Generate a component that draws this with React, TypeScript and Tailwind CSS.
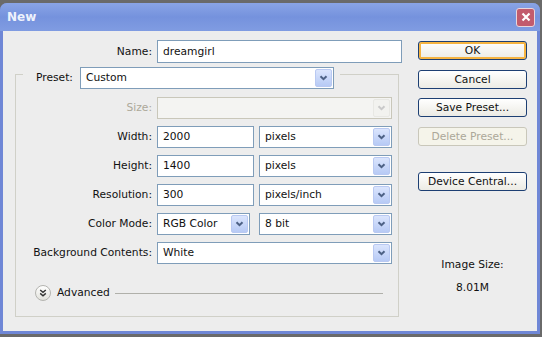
import type { ReactNode } from "react";

/* XP-style "New" document dialog */

function Chevron({ disabled }: { disabled?: boolean }) {
  return (
    <svg width="9" height="6" viewBox="0 0 9 6">
      <polyline
        points="1.5,1.2 4.5,4.2 7.5,1.2"
        fill="none"
        stroke={disabled ? "#c9c9c9" : "#4d6185"}
        strokeWidth="2"
      />
    </svg>
  );
}

function Select({
  value,
  width,
  disabled,
}: {
  value?: string;
  width: string;
  disabled?: boolean;
}) {
  return (
    <div
      className={`flex h-[22px] items-center border ${width} ${
        disabled ? "border-[#c9c7ba] bg-[#f4f4f2]" : "border-[#7f9db9] bg-white"
      }`}
    >
      <span className="flex-1 truncate pl-[5px] text-[#111]">{value}</span>
      <div
        className={`mr-px flex h-[18px] w-[17px] items-center justify-center rounded-[2px] border ${
          disabled
            ? "border-[#e8e8e4] bg-[#f2f2ef]"
            : "border-[#b9c9f2] bg-gradient-to-b from-[#dbe5fd] to-[#b7caf5]"
        }`}
      >
        <Chevron disabled={disabled} />
      </div>
    </div>
  );
}

function Input({ value, width }: { value: string; width: string }) {
  return (
    <div
      className={`flex h-[22px] items-center border border-[#7f9db9] bg-white pl-[5px] text-[#111] ${width}`}
    >
      {value}
    </div>
  );
}

function Row({
  label,
  muted,
  children,
}: {
  label: string;
  muted?: boolean;
  children: ReactNode;
}) {
  return (
    <div className="flex h-[22px] items-center">
      <div
        className={`w-[136px] text-right ${muted ? "text-[#aca899]" : "text-[#111]"}`}
      >
        {label}
      </div>
      <div className="ml-[5px] flex items-center">{children}</div>
    </div>
  );
}

function Button({
  children,
  isDefault,
  disabled,
  className = "",
}: {
  children: ReactNode;
  isDefault?: boolean;
  disabled?: boolean;
  className?: string;
}) {
  return (
    <div
      className={`flex h-[19px] w-[109px] items-center justify-center rounded-[3px] border ${
        disabled
          ? "border-[#c9c7ba] bg-[#f5f4ea] text-[#aca899]"
          : "border-[#1d3f73] bg-gradient-to-b from-[#ffffff] to-[#ecebe4] text-[#111]"
      } ${isDefault ? "shadow-[inset_0_0_0_2px_#f6b441]" : ""} ${className}`}
    >
      {children}
    </div>
  );
}

export default function App() {
  return (
    <div className="h-[337px] w-[542px] bg-[#6a6a6a] pr-[2px] pt-[3px] font-['DejaVu_Sans',sans-serif] text-[10.7px] leading-[14px]">
      <div className="flex h-[331px] flex-col rounded-t-[7px] bg-[#6f87d6]">
        {/* Title bar */}
        <div className="flex h-[28px] items-center rounded-t-[7px] bg-gradient-to-b from-[#8aa4e6] via-[#7592dd] to-[#809ce2] pl-[7px] pr-[5px]">
          <span className="flex-1 text-[12px] font-bold text-[#eef2fc]">New</span>
          <div className="flex h-[19px] w-[19px] items-center justify-center rounded-[3px] border border-[#e9d6dc] bg-[#c25b6d]">
            <svg width="10" height="10" viewBox="0 0 10 10">
              <path d="M1.5 1.5 L8.5 8.5 M8.5 1.5 L1.5 8.5" stroke="#fff" strokeWidth="2.2" />
            </svg>
          </div>
        </div>

        {/* Body */}
        <div className="flex flex-1 border-x-[3px] border-b-[3px] border-[#6f87d6] bg-[#ededed]">
          {/* Left column */}
          <div className="w-[402px] pt-[9px]">
            <div className="flex h-[23px] items-center">
              <div className="w-[149px] text-right text-[#111]">Name:</div>
              <div className="ml-[5px] flex h-[23px] w-[245px] items-center border border-[#7f9db9] bg-white pl-[5px] text-[#111]">
                dreamgirl
              </div>
            </div>

            <fieldset className="ml-[12px] mt-[4px] w-[384px] border border-[#d0d0c8]">
              <legend className="ml-[7px] h-[14px] pl-[13px] pr-[6px]">
                <div className="flex h-[22px] items-center">
                  <span className="w-[40px] text-[#111]">Preset:</span>
                  <div className="ml-[4px]">
                    <Select value="Custom" width="w-[254px]" />
                  </div>
                </div>
              </legend>

              <div className="flex flex-col gap-[7px] pt-[16px]">
                <Row label="Size:" muted>
                  <Select width="w-[235px]" disabled />
                </Row>
                <Row label="Width:">
                  <Input value="2000" width="w-[97px]" />
                  <div className="ml-[5px]">
                    <Select value="pixels" width="w-[133px]" />
                  </div>
                </Row>
                <Row label="Height:">
                  <Input value="1400" width="w-[97px]" />
                  <div className="ml-[5px]">
                    <Select value="pixels" width="w-[133px]" />
                  </div>
                </Row>
                <Row label="Resolution:">
                  <Input value="300" width="w-[97px]" />
                  <div className="ml-[5px]">
                    <Select value="pixels/inch" width="w-[133px]" />
                  </div>
                </Row>
                <Row label="Color Mode:">
                  <Select value="RGB Color" width="w-[93px]" />
                  <div className="ml-[9px]">
                    <Select value="8 bit" width="w-[133px]" />
                  </div>
                </Row>
                <Row label="Background Contents:">
                  <Select value="White" width="w-[235px]" />
                </Row>
              </div>

              <div className="ml-[19px] mr-[15px] mt-[21px] flex h-[16px] items-center">
                <div className="flex h-[16px] w-[16px] items-center justify-center rounded-full border border-[#b4b4b0] bg-gradient-to-b from-[#ffffff] to-[#e2e2dc]">
                  <svg width="8" height="8" viewBox="0 0 8 8">
                    <polyline points="1.2,1 4,3.4 6.8,1" fill="none" stroke="#333" strokeWidth="1.4" />
                    <polyline points="1.2,4.4 4,6.8 6.8,4.4" fill="none" stroke="#333" strokeWidth="1.4" />
                  </svg>
                </div>
                <span className="ml-[6px] text-[#111]">Advanced</span>
                <div className="ml-[5px] h-px flex-1 bg-[#b0b0aa]" />
              </div>
              <div className="h-[15px]" />
            </fieldset>
          </div>

          {/* Right column */}
          <div className="ml-[13px] flex w-[109px] flex-col items-center pt-[10px]">
            <Button isDefault>OK</Button>
            <Button className="mt-[10px]">Cancel</Button>
            <Button className="mt-[9px]">Save Preset...</Button>
            <Button className="mt-[10px]" disabled>
              Delete Preset...
            </Button>
            <Button className="mt-[26px]">Device Central...</Button>
            <div className="mt-[67px] text-[#111]">Image Size:</div>
            <div className="mt-[9px] text-[#111]">8.01M</div>
          </div>
        </div>
      </div>
    </div>
  );
}
